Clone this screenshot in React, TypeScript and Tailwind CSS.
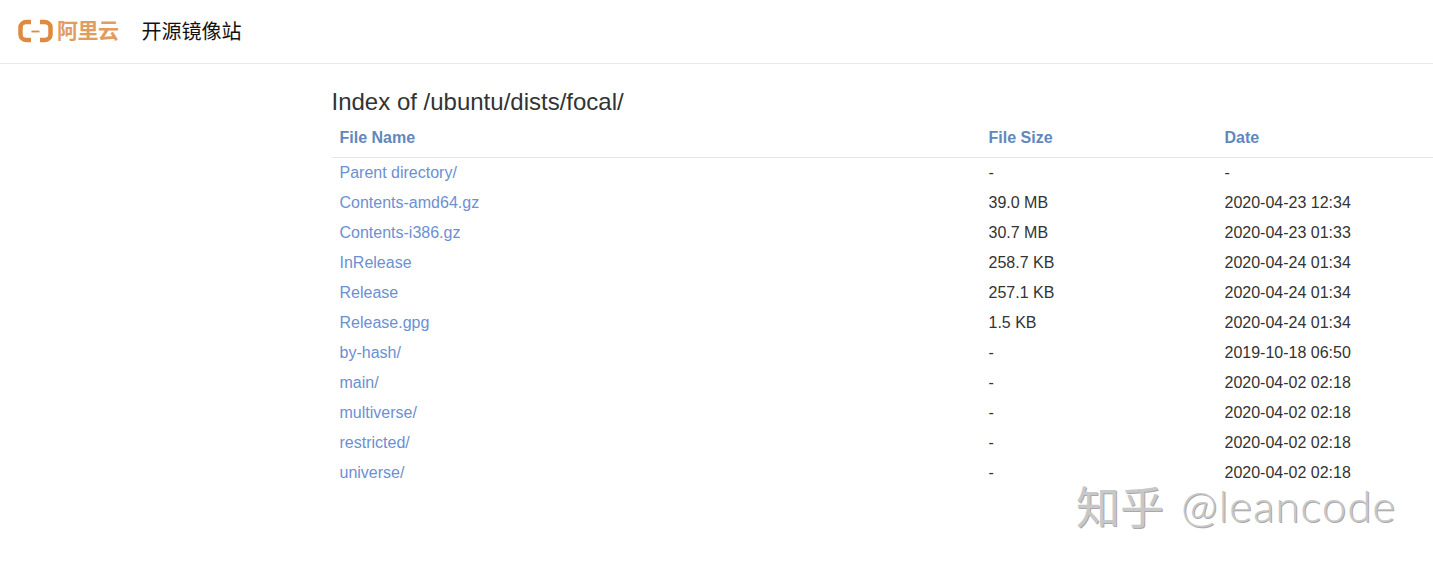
import React from "react";

const rows: [string, string, string][] = [
  ["Parent directory/", "-", "-"],
  ["Contents-amd64.gz", "39.0 MB", "2020-04-23 12:34"],
  ["Contents-i386.gz", "30.7 MB", "2020-04-23 01:33"],
  ["InRelease", "258.7 KB", "2020-04-24 01:34"],
  ["Release", "257.1 KB", "2020-04-24 01:34"],
  ["Release.gpg", "1.5 KB", "2020-04-24 01:34"],
  ["by-hash/", "-", "2019-10-18 06:50"],
  ["main/", "-", "2020-04-02 02:18"],
  ["multiverse/", "-", "2020-04-02 02:18"],
  ["restricted/", "-", "2020-04-02 02:18"],
  ["universe/", "-", "2020-04-02 02:18"],
];

const cjk = "font-['Liberation_Sans','Noto_Sans_CJK_SC',sans-serif]";

export default function App() {
  return (
    <div className={`relative h-[564px] w-[1433px] overflow-hidden bg-white ${cjk} text-[#333]`}>
      <header className="flex h-[64px] items-center border-b border-[#e9e9e9] pl-[18px]">
        <svg width="35" height="24" viewBox="0 0 35 24" className="shrink-0 -translate-y-px" aria-hidden="true">
          <path d="M13 3H8.500C5 3 2.500 5.500 2.500 8.500v7C2.500 18.500 5 21 8.500 21H13" fill="none" stroke="#df8a3e" strokeWidth="4.500" />
          <path d="M22 3h4.500C30 3 32.500 5.500 32.500 8.500v7c0 3-2.500 5.500-6 5.500H22" fill="none" stroke="#df8a3e" strokeWidth="4.500" />
          <path d="M13.500 12.500h8" stroke="#df8a3e" strokeWidth="1.800" />
        </svg>
        <span className="ml-[4px] -translate-y-px text-[21px] leading-none font-bold tracking-[-0.5px] text-[#e29b60]">阿里云</span>
        <span className="ml-[24px] -translate-x-px text-[20px] text-[#111]">开源镜像站</span>
      </header>
      <main className="ml-[331.5px]">
        <h1 className="mt-[24px] h-[28px] text-[24px] leading-[28px] font-normal text-[#333]">Index of /ubuntu/dists/focal/</h1>
        <div className="mt-[3px] grid h-[39px] grid-cols-[649px_236px_1fr] items-center border-b border-[#e5e5e5] pb-[1px] pl-[8px] text-[16px] font-bold text-[#6088bd]">
          <span>File Name</span>
          <span>File Size</span>
          <span>Date</span>
        </div>
        {rows.map(([name, size, date]) => (
          <div key={name} className="grid h-[30px] grid-cols-[649px_236px_1fr] items-center pl-[8px] text-[16px] text-[#333]">
            <a className="text-[#6b90d3]">{name}</a>
            <span>{size}</span>
            <span>{date}</span>
          </div>
        ))}
      </main>
      <div className="absolute top-[482px] left-[1076px] flex items-center text-[#c8c8c8] [text-shadow:1px_1px_0_#a8a8a8]">
        <span className="text-[44px] leading-[54px] font-normal whitespace-nowrap">知乎</span>
        <span className="ml-[17px] -translate-y-[4px] font-['Lato',sans-serif] text-[44px] leading-[54px] font-light tracking-[0.95px] whitespace-nowrap">@leancode</span>
      </div>
    </div>
  );
}
